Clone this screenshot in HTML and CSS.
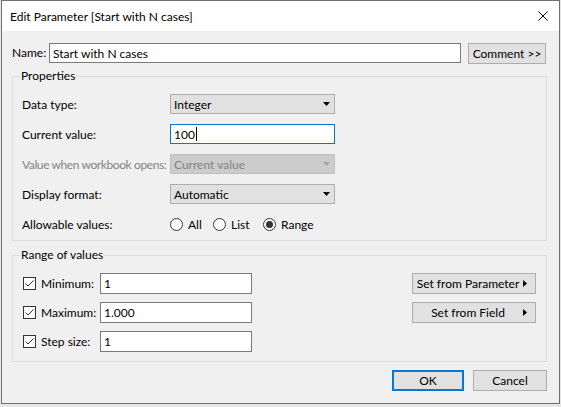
FILE: index.html
```html
<!DOCTYPE HTML>
<html>
    <head>
        <meta charset="utf-8">
        <link rel="stylesheet" href="styles.css">
    </head>
    <body>
        <div class="dialog">
            <div class="titleBar">
                <span class="title">Edit Parameter [Start with N cases]</span>
                <svg class="closeIcon" width="10" height="10" viewBox="0 0 10 10"><path d="M0.5 0.5 L9.5 9.5 M9.5 0.5 L0.5 9.5" stroke="#000" stroke-width="1" fill="none"/></svg>
            </div>
            <div class="content">
                <div class="nameRow">
                    <span class="nameLabel">Name:</span>
                    <div class="textBox nameBox">Start with N cases</div>
                    <div class="button commentButton">Comment &gt;&gt;</div>
                </div>

                <fieldset class="group properties">
                    <legend>Properties</legend>
                    <div class="propGrid">
                        <span>Data type:</span>
                        <div class="combo"><span>Integer</span><svg width="7" height="4" viewBox="0 0 7 4"><polygon points="0,0 7,0 3.5,4" fill="#000"/></svg></div>

                        <span>Current value:</span>
                        <div class="textBox focused">100<span class="caret"></span></div>

                        <span class="disabledText">Value when workbook opens:</span>
                        <div class="combo disabled"><span>Current value</span><svg width="7" height="4" viewBox="0 0 7 4"><polygon points="0,0 7,0 3.5,4" fill="#a6a6a6"/></svg></div>

                        <span>Display format:</span>
                        <div class="combo"><span>Automatic</span><svg width="7" height="4" viewBox="0 0 7 4"><polygon points="0,0 7,0 3.5,4" fill="#000"/></svg></div>

                        <span>Allowable values:</span>
                        <div class="radioRow">
                            <div class="radioOption optAll"><span class="radio"></span><span>All</span></div>
                            <div class="radioOption optList"><span class="radio"></span><span>List</span></div>
                            <div class="radioOption"><span class="radio checked"></span><span>Range</span></div>
                        </div>
                    </div>
                </fieldset>

                <fieldset class="group range">
                    <legend>Range of values</legend>
                    <div class="rangeGrid">
                        <div class="checkLabel"><svg class="checkBox" width="13" height="13" viewBox="0 0 13 13"><rect x="0.5" y="0.5" width="12" height="12" fill="#fff" stroke="#333"/><path d="M2.5 6.5 L5 9 L10.5 3.5" stroke="#333" fill="none"/></svg><span>Minimum:</span></div>
                        <div class="textBox">1</div>
                        <span></span>
                        <div class="button setButton"><span class="setText">Set from Parameter</span><svg width="4" height="7" viewBox="0 0 4 7"><polygon points="0,0 4,3.5 0,7" fill="#000"/></svg></div>

                        <div class="checkLabel"><svg class="checkBox" width="13" height="13" viewBox="0 0 13 13"><rect x="0.5" y="0.5" width="12" height="12" fill="#fff" stroke="#333"/><path d="M2.5 6.5 L5 9 L10.5 3.5" stroke="#333" fill="none"/></svg><span>Maximum:</span></div>
                        <div class="textBox">1.000</div>
                        <span></span>
                        <div class="button setButton"><span class="setText">Set from Field</span><svg width="4" height="7" viewBox="0 0 4 7"><polygon points="0,0 4,3.5 0,7" fill="#000"/></svg></div>

                        <div class="checkLabel"><svg class="checkBox" width="13" height="13" viewBox="0 0 13 13"><rect x="0.5" y="0.5" width="12" height="12" fill="#fff" stroke="#333"/><path d="M2.5 6.5 L5 9 L10.5 3.5" stroke="#333" fill="none"/></svg><span>Step size:</span></div>
                        <div class="textBox">1</div>
                    </div>
                </fieldset>

                <div class="buttonRow">
                    <div class="button okButton">OK</div>
                    <div class="button cancelButton">Cancel</div>
                </div>
            </div>
        </div>
    </body>
</html>
```

FILE: styles.css
```css
html, body {
    margin: 0;
    padding: 0;
}
body {
    width: 561px;
    height: 407px;
    overflow: hidden;
    background-color: #e6e6e6;
    font-family: Lato, "Noto Sans", sans-serif;
    font-size: 12px;
    color: #000;
    white-space: nowrap;
}
.dialog {
    box-sizing: border-box;
    width: 559px;
    height: 404px;
    margin-left: 1px;
    border: 1px solid #707070;
    background-color: #f0f0f0;
}
.titleBar {
    height: 30px;
    background-color: #fff;
    display: flex;
    align-items: center;
    justify-content: space-between;
    padding: 0 11px 0 8px;
}
.content {
    padding: 12px 12px 0 10px;
}
.nameRow {
    display: flex;
    align-items: flex-start;
    height: 21px;
}
.nameLabel {
    width: 37px;
    line-height: 20px;
}
.textBox {
    box-sizing: border-box;
    height: 20px;
    border: 1px solid #7a7a7a;
    background-color: #fff;
    padding: 0 3px;
    display: flex;
    align-items: center;
}
.nameBox {
    width: 412px;
}
.focused {
    border-color: #0078d7;
}
.caret {
    display: inline-block;
    width: 1px;
    height: 14px;
    background-color: #000;
    margin-left: 1px;
}
.button {
    box-sizing: border-box;
    height: 21px;
    border: 1px solid #adadad;
    background-color: #e1e1e1;
    display: flex;
    align-items: center;
    justify-content: center;
}
.commentButton {
    width: 78px;
    margin-left: 7px;
}
.group {
    box-sizing: border-box;
    width: 535px;
    margin: 5px 0 0 0;
    border: 1px solid #dcdcdc;
    min-width: 0;
}
.group legend {
    font-size: 12px;
    line-height: 14px;
    padding: 0 1px;
    margin-left: -2px;
}
.properties {
    padding: 11px 10px 6px 9px;
}
.range {
    margin-top: 7px;
    padding: 11px 10px 9px 10px;
}
.range legend {
    margin-left: -3px;
}
.propGrid {
    display: grid;
    grid-template-columns: 148px 165px;
    grid-auto-rows: 20px;
    row-gap: 10px;
    align-items: center;
}
.disabledText {
    color: #838383;
    letter-spacing: -0.4px;
}
.combo {
    box-sizing: border-box;
    height: 20px;
    border: 1px solid #adadad;
    background-color: #e1e1e1;
    display: flex;
    align-items: center;
    justify-content: space-between;
    padding: 0 4px 0 3px;
}
.combo.disabled {
    border-color: #bfbfbf;
    background-color: #cccccc;
    color: #838383;
}
.radioRow {
    display: flex;
    align-items: center;
}
.radioOption {
    display: flex;
    align-items: center;
}
.optAll {
    width: 43px;
}
.optList {
    width: 50px;
}
.radio {
    box-sizing: border-box;
    width: 13px;
    height: 13px;
    border: 1px solid #333;
    border-radius: 50%;
    background-color: #fff;
    margin-right: 5px;
    display: flex;
    align-items: center;
    justify-content: center;
}
.radio.checked::after {
    content: "";
    width: 7px;
    height: 7px;
    border-radius: 50%;
    background-color: #333;
}
.rangeGrid {
    display: grid;
    grid-template-columns: 77px 152px 1fr 124px;
    grid-auto-rows: 21px;
    row-gap: 8px;
    align-items: center;
}
.rangeGrid > .textBox {
    height: 21px;
}
.checkLabel {
    display: flex;
    align-items: center;
}
.checkBox {
    margin-right: 5px;
}
.setButton {
    justify-content: flex-start;
    padding-right: 8px;
}
.setText {
    flex: 1;
    text-align: center;
}
.buttonRow {
    display: flex;
    justify-content: flex-end;
    margin-top: 8px;
}
.okButton {
    width: 72px;
    border: 2px solid #0078d7;
}
.cancelButton {
    width: 74px;
    margin-left: 9px;
}
```
